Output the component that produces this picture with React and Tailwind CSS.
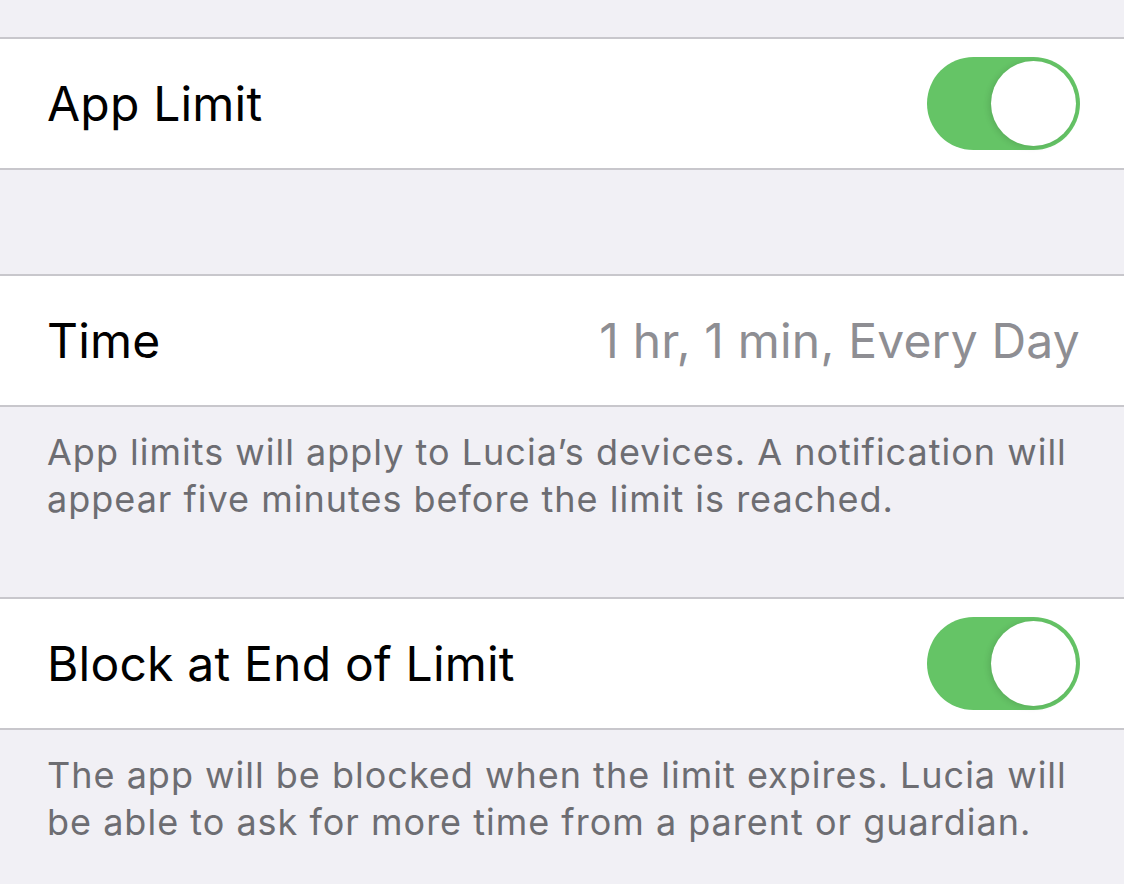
import React from 'react';

const Toggle = () => (
  <div className="relative w-[153px] h-[93px] rounded-full bg-[#65c466] shrink-0">
    <div className="absolute right-[4px] top-[4px] w-[85px] h-[85px] rounded-full bg-white shadow-[-2px_1px_6px_rgba(0,0,0,0.12)]" />
  </div>
);

const Row = ({ children }) => (
  <div className="h-[133px] bg-white border-y-2 border-[#c8c7cc] flex items-center justify-between pl-[47px] pr-[44px]">
    {children}
  </div>
);

export default function App() {
  return (
    <div className="w-[1124px] h-[884px] bg-[#f1f0f5] overflow-hidden font-['Inter',sans-serif] tracking-[0.2px]">
      <div className="h-[37px]" />
      <Row>
        <span className="text-[48px] text-black">App Limit</span>
        <Toggle />
      </Row>
      <div className="h-[104px]" />
      <Row>
        <span className="text-[48px] text-black">Time</span>
        <span className="text-[48px] text-[#8e8e93]">1 hr, 1 min, Every Day</span>
      </Row>
      <div className="h-[190px] pl-[47px] pr-[40px] pt-[22px] text-[36px] leading-[47px] tracking-[1px] text-[#6d6d72]">
        App limits will apply to Lucia’s devices. A notification will appear five minutes before the limit is reached.
      </div>
      <Row>
        <span className="text-[48px] text-black">Block at End of Limit</span>
        <Toggle />
      </Row>
      <div className="pl-[47px] pr-[40px] pt-[22px] text-[36px] leading-[47px] tracking-[1px] text-[#6d6d72]">
        The app will be blocked when the limit expires. Lucia will be able to ask for more time from a parent or guardian.
      </div>
    </div>
  );
}
